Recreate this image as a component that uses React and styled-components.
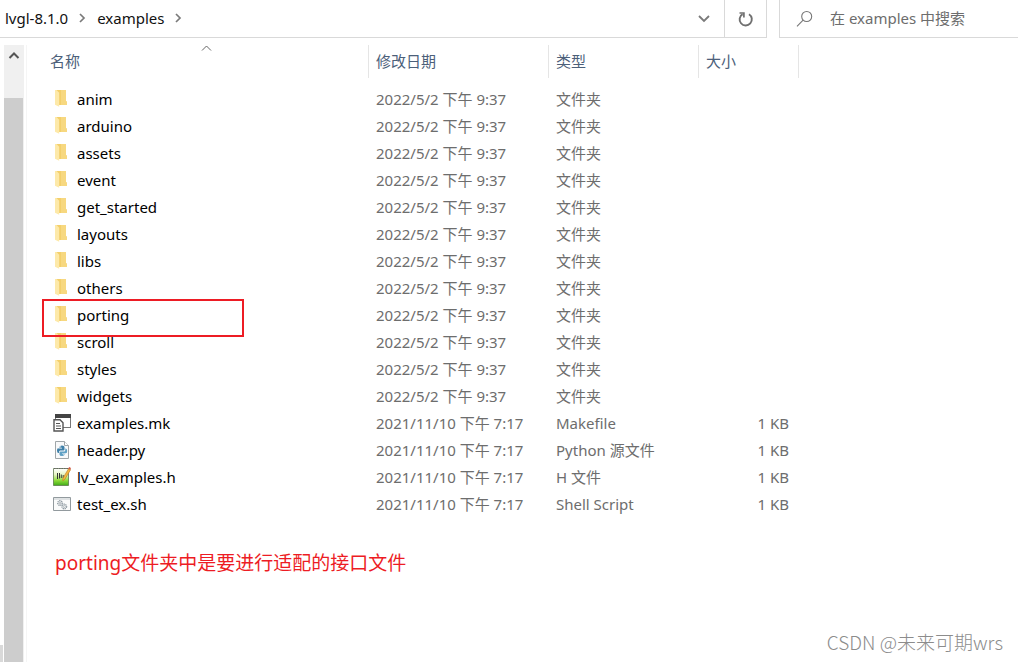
import React from "react";
import styled, { createGlobalStyle } from "styled-components";

const Global = createGlobalStyle`
  * { box-sizing: border-box; }
  body {
    margin: 0;
    background: #fff;
    color: #000;
    font: 15px/20px "Noto Sans", "Noto Sans CJK SC", sans-serif;
  }
  button, input { font: inherit; }
`;

const Window = styled.div`
  display: flex;
  flex-direction: column;
  min-height: 100vh;
  position: relative;
  overflow: hidden;
`;

const TopBar = styled.header`
  display: flex;
  gap: 12px;
  height: 38px;
`;

const AddressBar = styled.div`
  flex: 1;
  display: flex;
  align-items: stretch;
  border: solid #d9d9d9;
  border-width: 0 1px 1px 0;
`;

const Crumbs = styled.nav`
  flex: 1;
  display: flex;
  align-items: center;
  gap: 11px;
  padding: 0 0 2px 5px;
`;

const Crumb = styled.a`
  color: #111;
  text-decoration: none;
`;

const BarButton = styled.button`
  display: flex;
  align-items: center;
  justify-content: center;
  width: 42px;
  padding: 0;
  border: 0;
  border-left: 1px solid ${(p) => (p.$divided ? "#d9d9d9" : "transparent")};
  background: none;
`;

const SearchBox = styled.label`
  display: flex;
  align-items: center;
  gap: 16px;
  width: 239px;
  padding-left: 16px;
  border: solid #d9d9d9;
  border-width: 0 0 1px 1px;
`;

const SearchInput = styled.input`
  flex: 1;
  min-width: 0;
  padding: 0 0 2px;
  border: 0;
  outline: 0;
  background: none;
  &::placeholder { color: #6d6d6d; opacity: 1; }
`;

const Body = styled.div`
  flex: 1;
  display: flex;
  padding-top: 7px;
`;

const TreeEdge = styled.div`
  display: flex;
  align-items: flex-end;
  width: 4px;
`;

const TreeMark = styled.div`
  width: 3px;
  height: 17px;
  background: #d9d9d9;
`;

const ScrollBar = styled.div`
  display: flex;
  flex-direction: column;
  width: 20px;
  background: #f0f0f0;
`;

const ScrollUp = styled.button`
  display: flex;
  justify-content: center;
  height: 53px;
  padding: 5px 0 0;
  border: 0;
  background: none;
`;

const ScrollThumb = styled.div`
  flex: 1;
  margin-right: 1px;
  background: #cdcdcd;
`;

const Content = styled.main`
  flex: 1;
  margin-left: 2px;
  padding-left: 16px;
  border-left: 1px solid #f5f5f5;
`;

const FileTable = styled.table`
  table-layout: fixed;
  width: 756px;
  border-collapse: separate;
  border-spacing: 0;
`;

const HeadCell = styled.th`
  position: relative;
  width: ${(p) => p.$width}px;
  height: 33px;
  padding: 0 0 2px 7px;
  border-right: 1px solid #e5e5e5;
  text-align: left;
  font-weight: 400;
`;

const SortButton = styled.button`
  padding: 0;
  border: 0;
  background: none;
  color: #4c607a;
`;

const SortMark = styled.svg`
  position: absolute;
  top: 0;
  left: 50%;
  margin-left: -5px;
`;

const Rows = styled.tbody`
  &::before {
    content: "";
    display: block;
    height: 7px;
  }
`;

const Cell = styled.td`
  height: 27px;
  padding: 0 10px 0 7px;
  color: #6d6d6d;
  white-space: nowrap;
  text-align: ${(p) => (p.$right ? "right" : "left")};
`;

const NameCell = styled(Cell)`
  position: relative;
  padding-left: 10px;
  color: #000;
`;

const FileName = styled.div`
  display: flex;
  align-items: center;
  gap: 6px;
`;

const Highlight = styled.div`
  position: absolute;
  z-index: 1;
  top: -2px;
  left: -1px;
  width: 202px;
  height: 38px;
  border: 2px solid #ed1c24;
`;

const Note = styled.p`
  margin: 32px 0 0 12px;
  color: #ed1c24;
  font-size: 19px;
  line-height: 28px;
`;

const Watermark = styled.div`
  position: absolute;
  right: 15px;
  bottom: 6px;
  color: #8c8c8c;
  font: 300 19px/28px "Noto Sans CJK SC", sans-serif;
`;

const Chevron = ({ d, w, h, color = "#7a7a7a", stroke = 2 }) => (
  <svg width={w} height={h} viewBox={`0 0 ${w} ${h}`} fill="none" stroke={color} strokeWidth={stroke} aria-hidden="true">
    <path d={d} />
  </svg>
);

const CrumbArrow = () => <Chevron w={7} h={10} d="M1 1l4 4-4 4" stroke={1.7} />;

const RefreshIcon = () => (
  <svg width="16" height="16" viewBox="0 0 16 16" fill="none" stroke="#707070" strokeWidth="1.9" aria-hidden="true">
    <path d="M11 3.2A6.1 6.1 0 1 1 4.6 3.1" />
    <path d="M1.5 2h4.4v4.4" strokeWidth="1.7" />
  </svg>
);

const SearchIcon = () => (
  <svg width="18" height="18" viewBox="0 0 18 18" fill="none" stroke="#777" strokeWidth="1.1" aria-hidden="true">
    <circle cx="10.7" cy="6.5" r="5" />
    <path d="M7.1 10.2L1 16.4" />
  </svg>
);

const FolderIcon = () => (
  <svg width="18" height="18" viewBox="0 0 18 18" aria-hidden="true">
    <path d="M3 0h10v11l1 1v3H3z" fill="#f3cf6b" />
    <path d="M8 0h5v11l1 1v3H8z" fill="#f7d880" />
    <path d="M2 0h1.5l2.7 2.8v14L2 14.8z" fill="#fde9a9" />
  </svg>
);

const MakeIcon = () => (
  <svg width="18" height="18" viewBox="0 0 18 18" aria-hidden="true">
    <path d="M2 0h16v14h-8v-1h7V4H3v1H2z" fill="#777" />
    <path d="M2 0h16v4H2z" fill="#444" />
    <path d="M1 5.700h6l3 3V17H1z" fill="#fff" stroke="#555" strokeWidth="1.4" />
    <path d="M3 9.5h4M3 12h5M3 14.5h5" stroke="#555" strokeWidth="1.2" />
  </svg>
);

const PythonIcon = () => (
  <svg width="18" height="18" viewBox="0 0 18 18" aria-hidden="true">
    <path d="M2.5.5h9l4 4v13h-13z" fill="#f8f9fa" stroke="#a0a6a9" />
    <path d="M11.5.5v4h4" fill="#fff" stroke="#a0a6a9" />
    <path d="M6.5 6q0-1.500 2.500-1.500t2.500 1.500v2.500q0 1-1 1H7.200q-1.200 0-1.200 1.500v1H5.500q-1.500 0-1.500-2.500T5.500 7.400H9v-.6H6.500z" fill="#3d7fa8" />
    <path d="M12.300 7.400h.4q1.500 0 1.500 2.500t-1.500 2.300H9v.6h2.500v.6q0 1.500-2.500 1.500t-2.500-1.500v-2q0-1 1-1h3.500q1.300 0 1.300-1.500z" fill="#5fa0c4" />
    <circle cx="7.600" cy="5.800" r=".5" fill="#fff" />
    <circle cx="10.400" cy="13.700" r=".5" fill="#fff" />
  </svg>
);

const HeaderFileIcon = () => (
  <svg width="18" height="20" viewBox="0 0 18 20" aria-hidden="true">
    <defs>
      <linearGradient id="leaf" x1="0" y1="0" x2="0" y2="1">
        <stop offset="0" stopColor="#fff" />
        <stop offset=".35" stopColor="#e6f5c4" />
        <stop offset=".7" stopColor="#8fdc3a" />
        <stop offset="1" stopColor="#3faa17" />
      </linearGradient>
    </defs>
    <path d="M.5 1.500h15v17H.5z" fill="url(#leaf)" stroke="#5f7a4c" strokeWidth=".8" />
    <path d="M1 1.500h14" stroke="#666" strokeWidth="1.200" strokeDasharray="1.500 1" />
    <path d="M4.500 6v6M6.500 6v5.500" stroke="#333" strokeWidth="1" />
    <path d="M8.300 7.500v3.500M10.200 8v3" stroke="#333" strokeWidth=".9" />
    <path d="M15.600 1.500l2 1.200-5.800 9.700-2 1.400.2-2.600z" fill="#f6b93b" stroke="#b5762a" strokeWidth=".6" />
    <path d="M16.200 0l1.800 1.100-.8 1.700-2-1.200z" fill="#d0584a" />
  </svg>
);

const ShellIcon = () => (
  <svg width="18" height="18" viewBox="0 0 18 18" aria-hidden="true">
    <path d="M.5 2.500h17v13H.5z" fill="#fafbfb" stroke="#929a9e" />
    <path d="M1 4h16" stroke="#c4cacd" />
    <g fill="none" stroke="#8b979f">
      <circle cx="7" cy="8" r="2.300" strokeWidth="1.300" strokeDasharray="1.200 .6" />
      <circle cx="7" cy="8" r="1" strokeWidth=".6" />
      <circle cx="11.300" cy="11.500" r="2.300" strokeWidth="1.300" strokeDasharray="1.200 .6" />
      <circle cx="11.300" cy="11.500" r="1" strokeWidth=".6" />
    </g>
  </svg>
);

const folders = [
  "anim", "arduino", "assets", "event", "get_started", "layouts",
  "libs", "others", "porting", "scroll", "styles", "widgets",
];

const files = [
  ...folders.map((name) => ({ name, Icon: FolderIcon, date: "2022/5/2 下午 9:37", type: "文件夹", size: "" })),
  { name: "examples.mk", Icon: MakeIcon, type: "Makefile" },
  { name: "header.py", Icon: PythonIcon, type: "Python 源文件" },
  { name: "lv_examples.h", Icon: HeaderFileIcon, type: "H 文件" },
  { name: "test_ex.sh", Icon: ShellIcon, type: "Shell Script" },
].map((f) => ({ date: "2021/11/10 下午 7:17", size: "1 KB", ...f }));

const columns = [
  { label: "名称", width: 326, sorted: true },
  { label: "修改日期", width: 180 },
  { label: "类型", width: 150 },
  { label: "大小", width: 100 },
];

export default function App() {
  return (
    <Window>
      <Global />
      <TopBar>
        <AddressBar>
          <Crumbs>
            <Crumb href="#lvgl">lvgl-8.1.0</Crumb>
            <CrumbArrow />
            <Crumb href="#examples">examples</Crumb>
            <CrumbArrow />
          </Crumbs>
          <BarButton aria-label="历史记录">
            <Chevron w={12} h={8} d="M1 1l5 5 5-5" stroke={1.8} />
          </BarButton>
          <BarButton $divided aria-label="刷新">
            <RefreshIcon />
          </BarButton>
        </AddressBar>
        <SearchBox>
          <SearchIcon />
          <SearchInput placeholder="在 examples 中搜索" />
        </SearchBox>
      </TopBar>
      <Body>
        <TreeEdge>
          <TreeMark />
        </TreeEdge>
        <ScrollBar>
          <ScrollUp aria-label="向上滚动">
            <Chevron w={12} h={10} d="M1.500 8L6 3.500 10.500 8" color="#555" stroke={2} />
          </ScrollUp>
          <ScrollThumb />
        </ScrollBar>
        <Content>
          <FileTable>
            <thead>
              <tr>
                {columns.map((c) => (
                  <HeadCell key={c.label} $width={c.width} scope="col">
                    <SortButton>{c.label}</SortButton>
                    {c.sorted && (
                      <SortMark width="11" height="7" viewBox="0 0 11 7" fill="none" stroke="#666">
                        <path d="M1 5.500L5.500 1 10 5.500" />
                      </SortMark>
                    )}
                  </HeadCell>
                ))}
              </tr>
            </thead>
            <Rows>
              {files.map(({ name, Icon, date, type, size }) => (
                <tr key={name}>
                  <NameCell>
                    <FileName>
                      <Icon />
                      {name}
                    </FileName>
                    {name === "porting" && <Highlight />}
                  </NameCell>
                  <Cell>{date}</Cell>
                  <Cell>{type}</Cell>
                  <Cell $right>{size}</Cell>
                </tr>
              ))}
            </Rows>
          </FileTable>
          <Note>porting文件夹中是要进行适配的接口文件</Note>
        </Content>
      </Body>
      <Watermark>CSDN @未来可期wrs</Watermark>
    </Window>
  );
}
